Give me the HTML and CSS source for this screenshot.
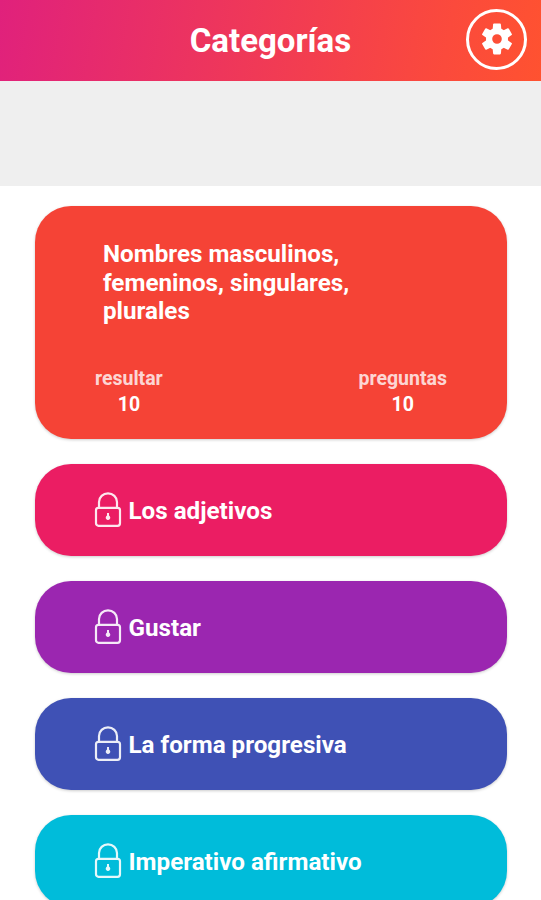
FILE: index.html
```html
<!DOCTYPE html>
<html lang="es">
<head>
  <meta charset="UTF-8" />
  <title>Categorías</title>
  <link rel="stylesheet" href="styles.css">
</head>
<body>

<svg class="sprite" width="0" height="0">
  <symbol id="lock" viewBox="0 0 28 36">
    <path d="M5 15V10a9 8.7 0 0 1 18 0v5" fill="none" stroke="currentColor" stroke-width="2.2" />
    <rect x="2" y="15.8" width="24" height="18" rx="2.5" fill="none" stroke="currentColor" stroke-width="2.2" />
    <path d="M13 21h2v2.6a2.3 2.3 0 1 1-2 0z" fill="currentColor" />
  </symbol>
</svg>

<header class="header">
  <h1>Categorías</h1>
  <button class="settings" aria-label="Ajustes">
    <svg viewBox="-16 -16 32 32">
      <circle r="7.9" fill="none" stroke="currentColor" stroke-width="6.2" />
      <g fill="currentColor">
        <path id="tooth" d="M-4.4 -9L-3.9 -14.6Q-3.8 -15.4 -3 -15.4H3Q3.8 -15.4 3.9 -14.6L4.4 -9z" />
        <use href="#tooth" transform="rotate(60)" />
        <use href="#tooth" transform="rotate(120)" />
        <use href="#tooth" transform="rotate(180)" />
        <use href="#tooth" transform="rotate(240)" />
        <use href="#tooth" transform="rotate(300)" />
      </g>
    </svg>
  </button>
</header>

<div class="banner"></div>

<main class="list">
  <div class="card open">
    <h2>Nombres masculinos, femeninos, singulares, plurales</h2>
    <div class="stats">
      <div class="stat">
        <span class="label">resultar</span>
        <span>10</span>
      </div>
      <div class="stat">
        <span class="label">preguntas</span>
        <span>10</span>
      </div>
    </div>
  </div>

  <div class="card locked pink">
    <svg class="lock"><use href="#lock" /></svg>
    <h2>Los adjetivos</h2>
  </div>
  <div class="card locked purple">
    <svg class="lock"><use href="#lock" /></svg>
    <h2>Gustar</h2>
  </div>
  <div class="card locked indigo">
    <svg class="lock"><use href="#lock" /></svg>
    <h2>La forma progresiva</h2>
  </div>
  <div class="card locked cyan">
    <svg class="lock"><use href="#lock" /></svg>
    <h2>Imperativo afirmativo</h2>
  </div>
</main>

</body>
</html>
```

FILE: styles.css
```css
* {
  box-sizing: border-box;
}

body {
  margin: 0;
  height: 900px;
  font-family: Roboto, sans-serif;
  font-weight: bold;
  color: white;
  background: white;
  overflow: hidden;
}

h1, h2 {
  margin: 0;
}

.sprite {
  display: block;
}

/* Header */
.header {
  display: grid;
  grid-template-columns: 1fr auto 1fr;
  align-items: center;
  height: 81px;
  padding: 0 14px;
  background: linear-gradient(100deg, #e0217c, #fb4a3c 82%, #ff5230);
}

.header h1 {
  grid-column: 2;
  font-size: 33px;
  line-height: 40px;
}

.settings {
  justify-self: end;
  display: flex;
  align-items: center;
  justify-content: center;
  width: 61px;
  height: 61px;
  margin-bottom: 3px;
  padding: 0;
  color: white;
  background: none;
  border: 3px solid white;
  border-radius: 50%;
}

.settings svg {
  width: 32px;
  height: 32px;
}

.banner {
  height: 105px;
  background: #efefef;
}

/* Category cards */
.list {
  display: flex;
  flex-direction: column;
  gap: 24.5px;
  padding: 20px 34px 0 35px;
}

.card {
  flex-shrink: 0;
  border-radius: 36px;
  box-shadow: 0 1px 3px rgba(0,0,0,0.2);
}

.card h2 {
  font-size: 24.2px;
  line-height: 28.5px;
}

.open {
  height: 233px;
  padding: 34px 60px 0 60px;
  background: #f54336;
}

.open h2 {
  max-width: 270px;
  margin-left: 8px;
}

.stats {
  display: flex;
  justify-content: space-between;
  margin-top: 40px;
  font-size: 19.5px;
  line-height: 26.5px;
}

.stat {
  display: flex;
  flex-direction: column;
  align-items: center;
}

.label {
  color: rgba(255,255,255,0.8);
}

.locked {
  display: flex;
  align-items: center;
  gap: 6.5px;
  height: 92.5px;
  padding-left: 59px;
}

.locked h2 {
  padding-top: 2px;
}

.lock {
  width: 28px;
  height: 36px;
  opacity: 0.9;
}

.pink {
  background: #eb1d63;
}

.purple {
  background: #9b26b0;
}

.indigo {
  background: #3f51b5;
}

.cyan {
  background: #00bcda;
}
```
